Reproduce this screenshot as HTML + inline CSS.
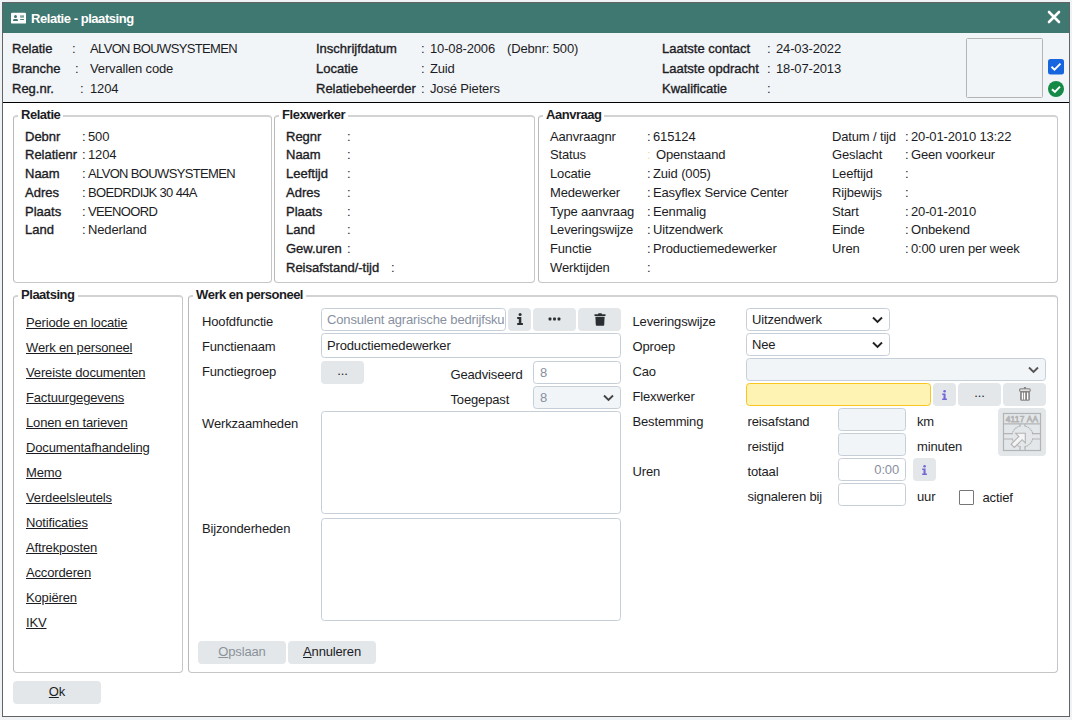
<!DOCTYPE html>
<html><head><meta charset="utf-8"><style>
*{margin:0;padding:0;box-sizing:border-box}
html,body{width:1072px;height:720px;overflow:hidden;background:#f0f3f5;position:relative}
body>div,body>svg{position:absolute}
.t{position:absolute;font-family:"Liberation Sans",sans-serif;font-size:13px;line-height:15px;white-space:pre;color:#1c1c24;letter-spacing:-0.15px}
.b{-webkit-text-stroke:0.35px currentColor;letter-spacing:0px}
.tb{font-weight:bold;letter-spacing:-0.45px}
.up{letter-spacing:-0.65px}
.white{color:#fff}
.frame{background:#fff;border:1px solid #636363}
.titlebar{background:#3f7771}
.hdr{background:#f2f5f8}
.photo{border:1px solid #b4b4b4;border-radius:1.5px;background:#f2f5f8}
.fs{border:1px solid #c6c6c6;border-top:2px solid #d3d3d3;border-left-color:#b9b9b9;border-radius:4px;background:transparent}
.legend{font-weight:bold;letter-spacing:-0.5px}
.lnk{text-decoration:underline}
.inp{position:absolute;overflow:hidden;background:#fff;border:1px solid #c6cfd8;border-radius:3.5px}
.inp.grey{background:#f2f5f8}
.inp.yel{background:#fff3b3;border-color:#fac51c}
.btn{position:absolute;background:#e3e7ea;border-radius:4px}
.ph{color:#8790a0}
.chk{position:absolute;background:#fff;border:1px solid #767676;border-radius:1px}
</style></head><body>
<div class="frame" style="left:2px;top:2px;width:1068px;height:715px;"></div>
<div class="titlebar" style="left:3px;top:3px;width:1066px;height:30px;"></div>
<svg style="position:absolute;left:11px;top:12px" width="15" height="12" viewBox="0 0 15 12">
<rect x="0" y="0.7" width="15" height="10.9" rx="1.2" fill="#fff"/>
<circle cx="4.5" cy="4.4" r="1.5" fill="#3f7771"/>
<path d="M2.1 8.9 V7.8 Q2.3 7.1 3.2 7.1 H5.8 Q6.7 7.1 6.9 7.8 V8.9 Z" fill="#3f7771"/>
<rect x="9.1" y="3.3" width="3.9" height="2.4" fill="#7fa39e"/>
<rect x="9.1" y="7.1" width="3.9" height="0.9" fill="#3f7771"/>
</svg>
<div class="t tb white" style="left:31px;top:11px;">Relatie - plaatsing</div>
<svg style="position:absolute;left:1047px;top:10px" width="14" height="14" viewBox="0 0 14 14">
<path d="M2 2 L12 12 M12 2 L2 12" stroke="#fff" stroke-width="2.6" stroke-linecap="round"/></svg>
<div class="hdr" style="left:3px;top:33px;width:1066px;height:69px;"></div>
<div class="" style="left:3px;top:102px;width:1066px;height:1px;background:#000"></div>
<div class="t b" style="left:12px;top:41px;">Relatie</div>
<div class="t " style="left:72px;top:41px;">:</div>
<div class="t up" style="left:90px;top:41px;">ALVON BOUWSYSTEMEN</div>
<div class="t b" style="left:12px;top:61px;">Branche</div>
<div class="t " style="left:75px;top:61px;">:</div>
<div class="t " style="left:90px;top:61px;">Vervallen code</div>
<div class="t b" style="left:12px;top:81px;">Reg.nr.</div>
<div class="t " style="left:80px;top:81px;">:</div>
<div class="t " style="left:90px;top:81px;">1204</div>
<div class="t b" style="left:316px;top:41px;">Inschrijfdatum</div>
<div class="t " style="left:421px;top:41px;">:</div>
<div class="t " style="left:430px;top:41px;">10-08-2006</div>
<div class="t b" style="left:316px;top:61px;">Locatie</div>
<div class="t " style="left:421px;top:61px;">:</div>
<div class="t " style="left:430px;top:61px;">Zuid</div>
<div class="t b" style="left:316px;top:81px;">Relatiebeheerder</div>
<div class="t " style="left:421px;top:81px;">:</div>
<div class="t " style="left:430px;top:81px;">Jos&eacute; Pieters</div>
<div class="t " style="left:507px;top:41px;">(Debnr: 500)</div>
<div class="t b" style="left:662px;top:41px;">Laatste contact</div>
<div class="t " style="left:767px;top:41px;">:</div>
<div class="t " style="left:776px;top:41px;">24-03-2022</div>
<div class="t b" style="left:662px;top:61px;">Laatste opdracht</div>
<div class="t " style="left:767px;top:61px;">:</div>
<div class="t " style="left:776px;top:61px;">18-07-2013</div>
<div class="t b" style="left:662px;top:81px;">Kwalificatie</div>
<div class="t " style="left:767px;top:81px;">:</div>
<div class="photo" style="left:966px;top:38px;width:77px;height:60px;"></div>
<svg style="position:absolute;left:1048px;top:59px" width="16" height="16" viewBox="0 0 16 16">
<rect x="0" y="0" width="16" height="15.5" rx="2.5" fill="#1766e0"/>
<path d="M3.5 7.8 L6.5 10.6 L12.5 4.6" stroke="#fff" stroke-width="1.9" fill="none"/></svg>
<svg style="position:absolute;left:1048px;top:81px" width="16" height="16" viewBox="0 0 16 16">
<circle cx="8" cy="8" r="8" fill="#148a46"/>
<path d="M4 8.2 L6.9 10.9 L12 5.6" stroke="#fff" stroke-width="2" fill="none"/></svg>
<div class="fs" style="left:13px;top:115px;width:259px;height:168px;"></div>
<div class="t legend" style="left:18px;top:107px;background:#fff;padding:0">&nbsp;Relatie&nbsp;</div>
<div class="fs" style="left:274px;top:115px;width:261px;height:168px;"></div>
<div class="t legend" style="left:279px;top:107px;background:#fff;padding:0">&nbsp;Flexwerker&nbsp;</div>
<div class="fs" style="left:538px;top:115px;width:520px;height:168px;"></div>
<div class="t legend" style="left:543px;top:107px;background:#fff;padding:0">&nbsp;Aanvraag&nbsp;</div>
<div class="t b" style="left:25px;top:129px;">Debnr</div>
<div class="t " style="left:82px;top:129px;">:</div>
<div class="t " style="left:88px;top:129px;">500</div>
<div class="t b" style="left:25px;top:147px;">Relatienr</div>
<div class="t " style="left:82px;top:147px;">:</div>
<div class="t " style="left:88px;top:147px;">1204</div>
<div class="t b" style="left:25px;top:166px;">Naam</div>
<div class="t " style="left:82px;top:166px;">:</div>
<div class="t up" style="left:88px;top:166px;">ALVON BOUWSYSTEMEN</div>
<div class="t b" style="left:25px;top:185px;">Adres</div>
<div class="t " style="left:82px;top:185px;">:</div>
<div class="t up" style="left:88px;top:185px;">BOEDRDIJK 30 44A</div>
<div class="t b" style="left:25px;top:204px;">Plaats</div>
<div class="t " style="left:82px;top:204px;">:</div>
<div class="t up" style="left:88px;top:204px;">VEENOORD</div>
<div class="t b" style="left:25px;top:222px;">Land</div>
<div class="t " style="left:82px;top:222px;">:</div>
<div class="t " style="left:88px;top:222px;">Nederland</div>
<div class="t b" style="left:286px;top:129px;">Regnr</div>
<div class="t " style="left:347px;top:129px;">:</div>
<div class="t b" style="left:286px;top:147px;">Naam</div>
<div class="t " style="left:347px;top:147px;">:</div>
<div class="t b" style="left:286px;top:166px;">Leeftijd</div>
<div class="t " style="left:347px;top:166px;">:</div>
<div class="t b" style="left:286px;top:185px;">Adres</div>
<div class="t " style="left:347px;top:185px;">:</div>
<div class="t b" style="left:286px;top:204px;">Plaats</div>
<div class="t " style="left:347px;top:204px;">:</div>
<div class="t b" style="left:286px;top:222px;">Land</div>
<div class="t " style="left:347px;top:222px;">:</div>
<div class="t b" style="left:286px;top:241px;">Gew.uren</div>
<div class="t " style="left:347px;top:241px;">:</div>
<div class="t b" style="left:286px;top:260px;">Reisafstand/-tijd</div>
<div class="t " style="left:391px;top:260px;">:</div>
<div class="t " style="left:550px;top:129px;">Aanvraagnr</div>
<div class="t " style="left:647px;top:129px;">:</div>
<div class="t " style="left:653px;top:129px;">615124</div>
<div class="t " style="left:550px;top:147px;">Status</div>
<div class="t " style="left:647px;top:147px;color:#f3d9a0">:</div>
<div class="t " style="left:656px;top:147px;">Openstaand</div>
<div class="t " style="left:550px;top:166px;">Locatie</div>
<div class="t " style="left:647px;top:166px;">:</div>
<div class="t " style="left:653px;top:166px;">Zuid (005)</div>
<div class="t " style="left:550px;top:185px;">Medewerker</div>
<div class="t " style="left:647px;top:185px;">:</div>
<div class="t " style="left:653px;top:185px;">Easyflex Service Center</div>
<div class="t " style="left:550px;top:204px;">Type aanvraag</div>
<div class="t " style="left:647px;top:204px;">:</div>
<div class="t " style="left:653px;top:204px;">Eenmalig</div>
<div class="t " style="left:550px;top:222px;">Leveringswijze</div>
<div class="t " style="left:647px;top:222px;">:</div>
<div class="t " style="left:653px;top:222px;">Uitzendwerk</div>
<div class="t " style="left:550px;top:241px;">Functie</div>
<div class="t " style="left:647px;top:241px;">:</div>
<div class="t " style="left:653px;top:241px;">Productiemedewerker</div>
<div class="t " style="left:550px;top:260px;">Werktijden</div>
<div class="t " style="left:647px;top:260px;">:</div>
<div class="t " style="left:832px;top:129px;">Datum / tijd</div>
<div class="t " style="left:905px;top:129px;">:</div>
<div class="t " style="left:911px;top:129px;">20-01-2010 13:22</div>
<div class="t " style="left:832px;top:147px;">Geslacht</div>
<div class="t " style="left:905px;top:147px;">:</div>
<div class="t " style="left:911px;top:147px;">Geen voorkeur</div>
<div class="t " style="left:832px;top:166px;">Leeftijd</div>
<div class="t " style="left:905px;top:166px;">:</div>
<div class="t " style="left:832px;top:185px;">Rijbewijs</div>
<div class="t " style="left:905px;top:185px;">:</div>
<div class="t " style="left:832px;top:204px;">Start</div>
<div class="t " style="left:905px;top:204px;">:</div>
<div class="t " style="left:911px;top:204px;">20-01-2010</div>
<div class="t " style="left:832px;top:222px;">Einde</div>
<div class="t " style="left:905px;top:222px;">:</div>
<div class="t " style="left:911px;top:222px;">Onbekend</div>
<div class="t " style="left:832px;top:241px;">Uren</div>
<div class="t " style="left:905px;top:241px;">:</div>
<div class="t " style="left:911px;top:241px;">0:00 uren per week</div>
<div class="fs" style="left:13px;top:295px;width:170px;height:378px;"></div>
<div class="t legend" style="left:18px;top:287px;background:#fff;padding:0">&nbsp;Plaatsing&nbsp;</div>
<div class="fs" style="left:188px;top:295px;width:870px;height:378px;"></div>
<div class="t legend" style="left:193px;top:287px;background:#fff;padding:0">&nbsp;Werk en personeel&nbsp;</div>
<div class="t lnk" style="left:26px;top:315px;">Periode en locatie</div>
<div class="t lnk" style="left:26px;top:340px;">Werk en personeel</div>
<div class="t lnk" style="left:26px;top:365px;">Vereiste documenten</div>
<div class="t lnk" style="left:26px;top:390px;">Factuurgegevens</div>
<div class="t lnk" style="left:26px;top:415px;">Lonen en tarieven</div>
<div class="t lnk" style="left:26px;top:440px;">Documentafhandeling</div>
<div class="t lnk" style="left:26px;top:465px;">Memo</div>
<div class="t lnk" style="left:26px;top:490px;">Verdeelsleutels</div>
<div class="t lnk" style="left:26px;top:515px;">Notificaties</div>
<div class="t lnk" style="left:26px;top:540px;">Aftrekposten</div>
<div class="t lnk" style="left:26px;top:565px;">Accorderen</div>
<div class="t lnk" style="left:26px;top:590px;">Kopi&euml;ren</div>
<div class="t lnk" style="left:26px;top:615px;">IKV</div>
<div class="t " style="left:202px;top:314px;">Hoofdfunctie</div>
<div class="t " style="left:202px;top:339px;">Functienaam</div>
<div class="t " style="left:202px;top:363.5px;">Functiegroep</div>
<div class="t " style="left:202px;top:415.5px;">Werkzaamheden</div>
<div class="t " style="left:202px;top:521px;">Bijzonderheden</div>
<div class="inp" style="left:321px;top:308px;width:185px;height:23px;"><div style="position:absolute;left:0;top:0;width:182px;height:21px;overflow:hidden"><div class="t ph" style="left:5px;top:3px">Consulent agrarische bedrijfskunde</div></div></div>
<div class="btn" style="left:508px;top:308px;width:23px;height:23px;"><svg style="position:absolute;left:9px;top:5px" width="6" height="12" viewBox="0 0 6 12" preserveAspectRatio="none"><circle cx="3.1" cy="1.55" r="1.55" fill="#2b2f33"/><path d="M0.2 4.1 H4.3 V10.1 H5.9 V12 H0.2 V10.1 H1.8 V5.9 H0.2 Z" fill="#2b2f33"/></svg></div>
<div class="btn" style="left:533px;top:308px;width:43px;height:23px;"><svg style="position:absolute;left:15px;top:9px" width="13" height="4" viewBox="0 0 13 4"><rect x="0.6" y="0.6" width="2.8" height="2.8" rx="0.7" fill="#2b2f33"/><rect x="5.1" y="0.6" width="2.8" height="2.8" rx="0.7" fill="#2b2f33"/><rect x="9.6" y="0.6" width="2.8" height="2.8" rx="0.7" fill="#2b2f33"/></svg></div>
<div class="btn" style="left:578px;top:308px;width:43px;height:23px;"><svg style="position:absolute;left:16px;top:5px" width="12" height="13" viewBox="0 0 12 13"><path d="M0.5 1.3 H4 L4.5 0.3 H7.5 L8 1.3 H11.5 V3 H0.5 Z" fill="#2b2f33"/><path d="M1.4 3.8 H10.6 L10.2 12 Q10.1 12.8 9.3 12.8 H2.7 Q1.9 12.8 1.8 12 Z" fill="#2b2f33"/></svg></div>
<div class="inp" style="left:321px;top:333px;width:300px;height:25px;"><div class="t" style="left:5px;top:3.5px">Productiemedewerker</div></div>
<div class="btn" style="left:321px;top:361px;width:43px;height:23px;"><div class="t" style="left:0;width:43px;text-align:center;top:2px">...</div></div>
<div class="t " style="left:450.5px;top:366.5px;">Geadviseerd</div>
<div class="t " style="left:450.5px;top:391.5px;">Toegepast</div>
<div class="inp" style="left:533px;top:361px;width:88px;height:23px;"><div class="t ph" style="left:6px;top:3px">8</div></div>
<div class="inp grey" style="left:533px;top:386px;width:88px;height:23px;"><div class="t ph" style="left:6px;top:3px">8</div><svg style="position:absolute;right:6px;top:7px" width="11" height="8" viewBox="0 0 11 8"><path d="M1 1.5 L5.5 6 L10 1.5" stroke="#444" stroke-width="1.9" fill="none"/></svg></div>
<div class="inp" style="left:321px;top:411px;width:300px;height:103px;"></div>
<div class="inp" style="left:321px;top:518px;width:300px;height:103px;"></div>
<div class="btn" style="left:198px;top:641px;width:88px;height:23px;"><div class="t" style="left:0;width:88px;text-align:center;top:3px;color:#8b9299"><u>O</u>pslaan</div></div>
<div class="btn" style="left:288px;top:641px;width:88px;height:23px;"><div class="t" style="left:0;width:88px;text-align:center;top:3px"><u>A</u>nnuleren</div></div>
<div class="t " style="left:632.5px;top:314px;">Leveringswijze</div>
<div class="t " style="left:632.5px;top:338.5px;">Oproep</div>
<div class="t " style="left:632.5px;top:363.5px;">Cao</div>
<div class="t " style="left:632.5px;top:388.5px;">Flexwerker</div>
<div class="t " style="left:632.5px;top:414px;">Bestemming</div>
<div class="t " style="left:632.5px;top:464px;">Uren</div>
<div class="inp" style="left:746px;top:308px;width:144px;height:23px;"><div class="t" style="left:5px;top:3px">Uitzendwerk</div><svg style="position:absolute;right:6px;top:7px" width="11" height="8" viewBox="0 0 11 8"><path d="M1 1.5 L5.5 6 L10 1.5" stroke="#222" stroke-width="1.9" fill="none"/></svg></div>
<div class="inp" style="left:746px;top:333px;width:144px;height:23px;"><div class="t" style="left:5px;top:3px">Nee</div><svg style="position:absolute;right:6px;top:7px" width="11" height="8" viewBox="0 0 11 8"><path d="M1 1.5 L5.5 6 L10 1.5" stroke="#222" stroke-width="1.9" fill="none"/></svg></div>
<div class="inp grey" style="left:746px;top:358px;width:300px;height:23px;"><svg style="position:absolute;right:6px;top:7px" width="11" height="8" viewBox="0 0 11 8"><path d="M1 1.5 L5.5 6 L10 1.5" stroke="#555" stroke-width="1.9" fill="none"/></svg></div>
<div class="inp yel" style="left:746px;top:383px;width:185px;height:23px;"></div>
<div class="btn" style="left:933px;top:383px;width:23px;height:23px;"><svg style="position:absolute;left:9px;top:6.5px" width="5" height="10" viewBox="0 0 6 12" preserveAspectRatio="none"><circle cx="3.1" cy="1.55" r="1.55" fill="#7468d8"/><path d="M0.2 4.1 H4.3 V10.1 H5.9 V12 H0.2 V10.1 H1.8 V5.9 H0.2 Z" fill="#7468d8"/></svg></div>
<div class="btn" style="left:958px;top:383px;width:43px;height:23px;"><div class="t" style="left:0;width:43px;text-align:center;top:2px">...</div></div>
<div class="btn" style="left:1003px;top:383px;width:43px;height:23px;"><svg style="position:absolute;left:16px;top:4px" width="12" height="14" viewBox="0 0 12 14"><rect x="4.9" y="0" width="2.2" height="1.8" fill="#858585"/><rect x="0.6" y="1.9" width="10.6" height="2.5" rx="1" fill="#fff" stroke="#858585" stroke-width="1.2"/><path d="M1.1 4.6 H10.9 V12.6 Q10.9 13.7 9.8 13.7 H2.2 Q1.1 13.7 1.1 12.6 Z" fill="#858585"/><rect x="2.8" y="5.6" width="1.3" height="7" fill="#fff"/><rect x="4.9" y="5.6" width="1.3" height="7" fill="#fff"/><rect x="8" y="5.6" width="1.3" height="7" fill="#fff"/></svg></div>
<div class="t " style="left:747.5px;top:414px;">reisafstand</div>
<div class="t " style="left:747.5px;top:439px;">reistijd</div>
<div class="t " style="left:747.5px;top:464px;">totaal</div>
<div class="t " style="left:747.5px;top:489px;">signaleren bij</div>
<div class="inp grey" style="left:838px;top:408px;width:68px;height:23px;"></div>
<div class="inp grey" style="left:838px;top:433px;width:68px;height:23px;"></div>
<div class="inp" style="left:838px;top:458px;width:68px;height:23px;"><div class="t ph" style="right:6px;top:3px">0:00</div></div>
<div class="inp" style="left:838px;top:483px;width:68px;height:23px;"></div>
<div class="t " style="left:917px;top:413.5px;">km</div>
<div class="t " style="left:917px;top:438.5px;">minuten</div>
<div class="t " style="left:917px;top:488.5px;">uur</div>
<div class="btn" style="left:913px;top:458px;width:23px;height:23px;"><svg style="position:absolute;left:9px;top:6.5px" width="5" height="10" viewBox="0 0 6 12" preserveAspectRatio="none"><circle cx="3.1" cy="1.55" r="1.55" fill="#7468d8"/><path d="M0.2 4.1 H4.3 V10.1 H5.9 V12 H0.2 V10.1 H1.8 V5.9 H0.2 Z" fill="#7468d8"/></svg></div>
<div class="chk" style="left:959px;top:490px;width:15px;height:15px;"></div>
<div class="t " style="left:982.5px;top:489.5px;">actief</div>
<div class="btn" style="left:998px;top:408px;width:48px;height:48px;"><svg style="position:absolute;left:0;top:0" width="48" height="48" viewBox="0 0 48 48">
<circle cx="24.5" cy="28.3" r="10.6" fill="none" stroke="#b3b3b3" stroke-width="1.1" stroke-dasharray="1.6 0.6"/>
<rect x="6.2" y="26.2" width="9.5" height="4.3" fill="#e3e7ea"/>
<rect x="33" y="26.2" width="8.8" height="4.3" fill="#e3e7ea"/>
<rect x="22.6" y="16.4" width="4" height="3" fill="#e3e7ea"/>
<rect x="22.6" y="37" width="4" height="5" fill="#e3e7ea"/>
<rect x="5.5" y="5.5" width="37" height="37" fill="none" stroke="#b3b3b3" stroke-width="1.2"/>
<path d="M5.5 15.8 H42.5" stroke="#b3b3b3" stroke-width="1.2"/>
<text x="24" y="13.7" font-family="Liberation Sans" font-size="8.4" text-anchor="middle" fill="none" stroke="#b3b3b3" stroke-width="0.75" letter-spacing="0.2">4117 AA</text>
<path d="M5.5 25.7 H15 M5.5 31 H15 M34 25.7 H42.5 M34 31 H42.5 M22 15.8 V18.5 M27 15.8 V18.5 M22 38.2 V42.5 M27 38.2 V42.5" stroke="#b3b3b3" stroke-width="1.2" fill="none"/>
<path d="M27.3 25.3 L27.3 34.9 L24.13 31.73 L16.35 39.51 L13.09 36.25 L20.87 28.47 L17.7 25.3 Z" fill="#f4f4f4" stroke="#b3b3b3" stroke-width="1.1" stroke-linejoin="miter"/>
</svg></div>
<div class="btn" style="left:13px;top:681px;width:88px;height:23px;"><div class="t" style="left:0;width:88px;text-align:center;top:3px"><u>O</u>k</div></div>
</body></html>
